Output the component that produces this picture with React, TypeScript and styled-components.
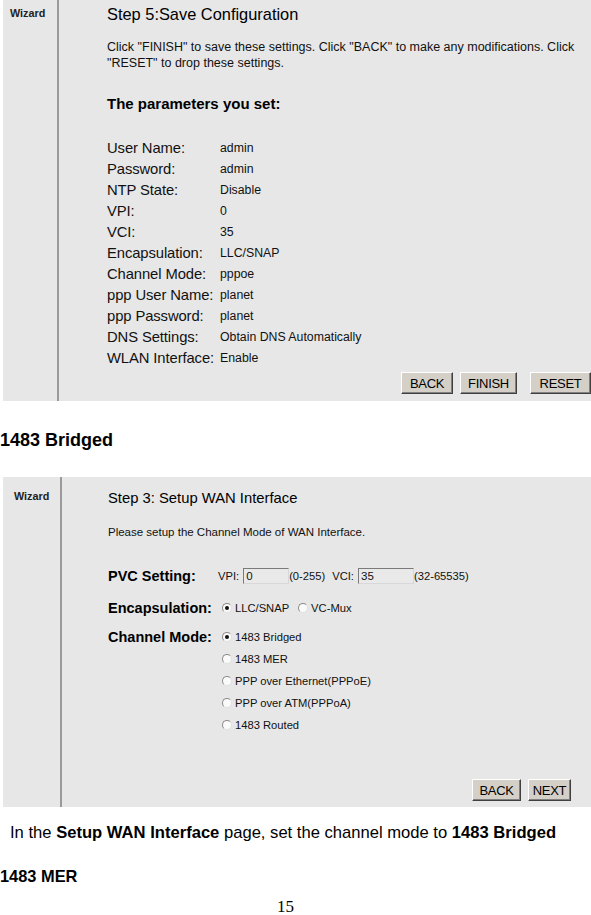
import { Fragment } from 'react';
import styled, { createGlobalStyle } from 'styled-components';

const GlobalStyle = createGlobalStyle`
  html, body {
    margin: 0;
    padding: 0;
    background: #ffffff;
  }
  body {
    font-family: "Liberation Sans", Arial, sans-serif;
    color: #000;
  }
`;

const Page = styled.div`
  width: 591px;
  display: flex;
  flex-direction: column;
`;

const Panel = styled.div<{ $height: number; $mt?: number }>`
  margin: ${(p) => p.$mt ?? 0}px 0 0 3px;
  width: 588px;
  height: ${(p) => p.$height}px;
  background: #e7e7e7;
  display: flex;
  box-sizing: border-box;
`;

const Sidebar = styled.div<{ $width: number; $top: number; $left: number }>`
  width: ${(p) => p.$width}px;
  flex: none;
  border-right: 2px solid #9a9a9a;
  padding: ${(p) => p.$top}px 0 0 ${(p) => p.$left}px;
  box-sizing: border-box;
  font-size: 10.8px;
  font-weight: bold;
  color: #222;
`;

const Content = styled.div<{ $left: number; $top: number }>`
  flex: 1;
  display: flex;
  flex-direction: column;
  padding: ${(p) => p.$top}px 0 0 ${(p) => p.$left}px;
`;

const StepTitle = styled.div<{ $size: number; $lh: number }>`
  font-size: ${(p) => p.$size}px;
  line-height: ${(p) => p.$lh}px;
  white-space: nowrap;
`;

const Desc = styled.div<{ $size: number; $lh: number; $mt: number }>`
  font-size: ${(p) => p.$size}px;
  line-height: ${(p) => p.$lh}px;
  margin-top: ${(p) => p.$mt}px;
  color: #111;
  white-space: nowrap;
`;

const ParamsHeading = styled.div`
  margin-top: 23px;
  font-size: 15px;
  font-weight: bold;
  line-height: 20px;
`;

const ParamList = styled.div`
  margin-top: 23px;
  display: grid;
  grid-template-columns: 113px 1fr;
  grid-auto-rows: 21px;
  align-items: center;
`;

const ParamLabel = styled.div`
  font-size: 14.8px;
  color: #111;
  white-space: nowrap;
  letter-spacing: -0.1px;
`;

const ParamValue = styled.div`
  font-size: 12.3px;
  color: #111;
  white-space: nowrap;
`;

const ButtonRow = styled.div<{ $mt: number; $right: number; $gap: number }>`
  display: flex;
  justify-content: flex-end;
  gap: ${(p) => p.$gap}px;
  margin-top: ${(p) => p.$mt}px;
  margin-right: ${(p) => p.$right}px;
`;

const WinButton = styled.button<{ $w: number; $ml?: number }>`
  width: ${(p) => p.$w}px;
  height: 22px;
  margin-left: ${(p) => p.$ml ?? 0}px;
  padding: 0;
  background: #d4d0c8;
  border: 1px solid;
  border-color: #ffffff #404040 #404040 #ffffff;
  box-shadow: inset -1px -1px 0 #808080;
  font-family: "Liberation Sans", Arial, sans-serif;
  font-size: 13px;
  letter-spacing: -0.3px;
  color: #000;
`;

const Heading = styled.div<{ $size: number; $mt: number }>`
  font-size: ${(p) => p.$size}px;
  font-weight: bold;
  line-height: 24px;
  margin-top: ${(p) => p.$mt}px;
`;

const FormRow = styled.div<{ $mt: number }>`
  display: grid;
  grid-template-columns: 110px 1fr;
  margin-top: ${(p) => p.$mt}px;
`;

const FormLabel = styled.div`
  font-size: 14.5px;
  font-weight: bold;
  line-height: 22px;
  white-space: nowrap;
`;

const FieldLine = styled.div`
  display: flex;
  align-items: center;
  height: 22px;
  font-size: 11.2px;
  color: #111;
  white-space: nowrap;
`;

const Options = styled.div`
  display: flex;
  flex-direction: column;
`;

const TextBox = styled.div<{ $w: number }>`
  width: ${(p) => p.$w}px;
  height: 16px;
  box-sizing: border-box;
  margin-left: 4px;
  border: 1px solid;
  border-color: #7a7a7a #d8d8d8 #d8d8d8 #7a7a7a;
  background: #e9e9e9;
  padding-left: 2px;
  font-size: 11.5px;
  line-height: 14px;
`;

const Gap = styled.span<{ $w: number }>`
  display: inline-block;
  width: ${(p) => p.$w}px;
`;

const Radio = styled.span<{ $checked?: boolean }>`
  position: relative;
  display: inline-block;
  width: 10px;
  height: 10px;
  box-sizing: border-box;
  margin: 0 3px 0 4px;
  border-radius: 50%;
  border: 1px solid;
  border-color: #8a8a8a #e0e0e0 #e0e0e0 #8a8a8a;
  background: #fafafa;
  &::after {
    content: '';
    display: ${(p) => (p.$checked ? 'block' : 'none')};
    position: absolute;
    left: 2px;
    top: 2px;
    width: 4px;
    height: 4px;
    border-radius: 50%;
    background: #111;
  }
`;

const Caption = styled.div`
  margin-top: 16px;
  padding-left: 10px;
  font-size: 16.6px;
  line-height: 20px;
  white-space: nowrap;
`;

const PageNumber = styled.div`
  margin-top: 11px;
  padding-left: 277px;
  font-family: "Liberation Serif", "Times New Roman", serif;
  font-size: 17px;
  line-height: 16px;
`;

const params: [string, string][] = [
  ['User Name:', 'admin'],
  ['Password:', 'admin'],
  ['NTP State:', 'Disable'],
  ['VPI:', '0'],
  ['VCI:', '35'],
  ['Encapsulation:', 'LLC/SNAP'],
  ['Channel Mode:', 'pppoe'],
  ['ppp User Name:', 'planet'],
  ['ppp Password:', 'planet'],
  ['DNS Settings:', 'Obtain DNS Automatically'],
  ['WLAN Interface:', 'Enable'],
];

const channelModes = [
  '1483 Bridged',
  '1483 MER',
  'PPP over Ethernet(PPPoE)',
  'PPP over ATM(PPPoA)',
  '1483 Routed',
];

const App = () => {
  return (
    <Page>
      <GlobalStyle />

      <Panel $height={401}>
        <Sidebar $width={56} $top={7} $left={7}>
          Wizard
        </Sidebar>
        <Content $left={48} $top={4}>
          <StepTitle $size={16.4} $lh={20}>
            Step 5:Save Configuration
          </StepTitle>
          <Desc $size={12.5} $lh={16} $mt={15}>
            Click "FINISH" to save these settings. Click "BACK" to make any modifications. Click
            <br />
            "RESET" to drop these settings.
          </Desc>
          <ParamsHeading>The parameters you set:</ParamsHeading>
          <ParamList>
            {params.map(([label, value]) => (
              <Fragment key={label}>
                <ParamLabel>{label}</ParamLabel>
                <ParamValue>{value}</ParamValue>
              </Fragment>
            ))}
          </ParamList>
          <ButtonRow $mt={4} $right={0} $gap={0}>
            <WinButton $w={52}>BACK</WinButton>
            <WinButton $w={57} $ml={7}>FINISH</WinButton>
            <WinButton $w={61} $ml={13}>RESET</WinButton>
          </ButtonRow>
        </Content>
      </Panel>

      <Heading $size={18} $mt={27}>1483 Bridged</Heading>

      <Panel $height={330} $mt={25}>
        <Sidebar $width={59} $top={13} $left={11}>
          Wizard
        </Sidebar>
        <Content $left={46} $top={12}>
          <StepTitle $size={14.8} $lh={18}>
            Step 3: Setup WAN Interface
          </StepTitle>
          <Desc $size={11.5} $lh={14} $mt={18}>
            Please setup the Channel Mode of WAN Interface.
          </Desc>
          <FormRow $mt={26}>
            <FormLabel>PVC Setting:</FormLabel>
            <FieldLine>
              VPI:
              <TextBox $w={46}>0</TextBox>
              (0-255)
              <Gap $w={7} />
              VCI:
              <TextBox $w={56}>35</TextBox>
              (32-65535)
            </FieldLine>
          </FormRow>
          <FormRow $mt={10}>
            <FormLabel>Encapsulation:</FormLabel>
            <FieldLine>
              <Radio $checked />
              LLC/SNAP
              <Gap $w={5} />
              <Radio />
              VC-Mux
            </FieldLine>
          </FormRow>
          <FormRow $mt={7}>
            <FormLabel>Channel Mode:</FormLabel>
            <Options>
              {channelModes.map((mode, i) => (
                <FieldLine key={mode}>
                  <Radio $checked={i === 0} />
                  {mode}
                </FieldLine>
              ))}
            </Options>
          </FormRow>
          <ButtonRow $mt={43} $right={20} $gap={7}>
            <WinButton $w={49}>BACK</WinButton>
            <WinButton $w={43}>NEXT</WinButton>
          </ButtonRow>
        </Content>
      </Panel>

      <Caption>
        In the <b>Setup WAN Interface</b> page, set the channel mode to <b>1483 Bridged</b>
      </Caption>
      <Heading $size={16.4} $mt={21}>1483 MER</Heading>
      <PageNumber>15</PageNumber>
    </Page>
  );
};

export default App;
